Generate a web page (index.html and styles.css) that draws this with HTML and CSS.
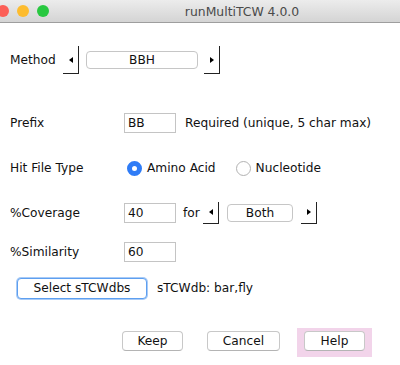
FILE: index.html
```html
<!DOCTYPE html>
<html lang="en">
<head>
  <meta charset="UTF-8" />
  <title>runMultiTCW 4.0.0</title>
  <link rel="stylesheet" href="styles.css">
</head>
<body>
  <div class="window">
    <div class="titlebar">
      <div class="lights">
        <span class="light red"></span>
        <span class="light yellow"></span>
        <span class="light green"></span>
      </div>
      <div class="title">runMultiTCW 4.0.0</div>
    </div>

    <div class="panel">
      <div class="row method-row">
        <span class="method-label">Method</span>
        <span class="arrow-btn big"><span class="tri left"></span></span>
        <span class="choice method-choice">BBH</span>
        <span class="arrow-btn big"><span class="tri right"></span></span>
      </div>

      <div class="row prefix-row">
        <span class="label">Prefix</span>
        <span class="field">BB</span>
        <span class="hint">Required (unique, 5 char max)</span>
      </div>

      <div class="row hit-row">
        <span class="label">Hit File Type</span>
        <span class="radio checked"></span>
        <span class="radio-text">Amino Acid</span>
        <span class="radio"></span>
        <span class="radio-text">Nucleotide</span>
      </div>

      <div class="row coverage-row">
        <span class="label">%Coverage</span>
        <span class="field">40</span>
        <span class="for">for</span>
        <span class="arrow-btn"><span class="tri left"></span></span>
        <span class="choice both-choice">Both</span>
        <span class="arrow-btn"><span class="tri right"></span></span>
      </div>

      <div class="row similarity-row">
        <span class="label">%Similarity</span>
        <span class="field">60</span>
      </div>

      <div class="row select-row">
        <span class="btn select-btn">Select sTCWdbs</span>
        <span class="db-text">sTCWdb: bar,fly</span>
      </div>

      <div class="row actions">
        <span class="slot"><span class="btn keep">Keep</span></span>
        <span class="slot"><span class="btn cancel">Cancel</span></span>
        <span class="slot focused"><span class="btn help">Help</span></span>
      </div>
    </div>
  </div>
</body>
</html>
```

FILE: styles.css
```css
body {
  margin: 0;
  background: #fff;
  font-family: 'DejaVu Sans', Verdana, sans-serif;
  font-size: 12.2px;
  color: #111;
}

.window {
  width: 400px;
  height: 365px;
  overflow: hidden;
}

.titlebar {
  position: relative;
  height: 22px;
  background: linear-gradient(to bottom, #ececec, #d4d4d4);
  border-bottom: 1px solid #9e9e9e;
  display: flex;
  align-items: center;
}

.lights {
  display: flex;
  gap: 8px;
  margin-left: -3px;
}

.light {
  width: 12px;
  height: 12px;
  border-radius: 50%;
}

.red { background: #fc5f57; }
.yellow { background: #fdbc2e; }
.green { background: #28c840; }

.title {
  position: absolute;
  left: 242px;
  top: 0;
  transform: translateX(-50%);
  line-height: 23px;
  font-size: 12.4px;
  color: #4a4a4a;
  white-space: nowrap;
}

.panel {
  padding-left: 10px;
}

.row {
  display: flex;
  align-items: center;
}

.method-row {
  height: 30px;
  margin-top: 22px;
}

.method-label {
  width: 53px;
}

.arrow-btn {
  width: 15px;
  height: 27px;
  border-right: 1px solid #222;
  border-bottom: 1px solid #222;
  display: flex;
  align-items: center;
  justify-content: center;
}

.arrow-btn:not(.big) {
  height: 21px;
}

.tri {
  width: 0;
  height: 0;
  border-top: 3.5px solid transparent;
  border-bottom: 3.5px solid transparent;
}

.tri.left { border-right: 4px solid #000; }
.tri.right { border-left: 4px solid #000; }

.choice {
  height: 16px;
  border: 1px solid #c6c6c6;
  border-radius: 4px;
  background: #fff;
  text-align: center;
  line-height: 16px;
}

.method-choice {
  width: 110px;
  margin: 0 6px 0 7px;
}

.both-choice {
  width: 64px;
  margin: 0 8px 0 8px;
}

.label {
  width: 114px;
}

.field {
  box-sizing: border-box;
  width: 52px;
  height: 20px;
  border: 1px solid #c4c4c4;
  padding-left: 3px;
  line-height: 18px;
}

.prefix-row {
  height: 22px;
  margin-top: 37px;
}

.hint {
  margin-left: 9px;
}

.hit-row {
  height: 22px;
  margin-top: 23px;
}

.radio {
  box-sizing: border-box;
  width: 15px;
  height: 15px;
  border-radius: 50%;
  border: 1px solid #b2b2b2;
  background: #fff;
  margin-left: 3px;
}

.radio.checked {
  border: 5px solid #2f7cf6;
  background: #fff;
}

.radio-text {
  margin-left: 5px;
  margin-right: 17px;
}

.coverage-row {
  height: 23px;
  margin-top: 22px;
}

.for {
  margin-left: 7px;
  width: 20px;
}

.similarity-row {
  height: 22px;
  margin-top: 17px;
}

.select-row {
  height: 22px;
  margin-top: 14px;
}

.btn {
  display: block;
  box-sizing: border-box;
  height: 20px;
  border: 1px solid #c8c8c8;
  border-bottom-color: #b4b4b4;
  border-radius: 4px;
  background: #fff;
  text-align: center;
  line-height: 18px;
}

.select-btn {
  width: 130px;
  height: 21px;
  margin-left: 7px;
  border: 1px solid #5d9ff0;
  box-shadow: 0 0 0 1px #a9cbf6;
}

.db-text {
  margin-left: 10px;
}

.actions {
  margin-top: 29px;
  margin-left: 105px;
  gap: 10px;
}

.slot {
  padding: 3px 7px 6px 7px;
}

.slot.focused {
  background: #f2d4ea;
}

.keep { width: 61px; }
.cancel { width: 73px; }
.help { width: 61px; }
```
